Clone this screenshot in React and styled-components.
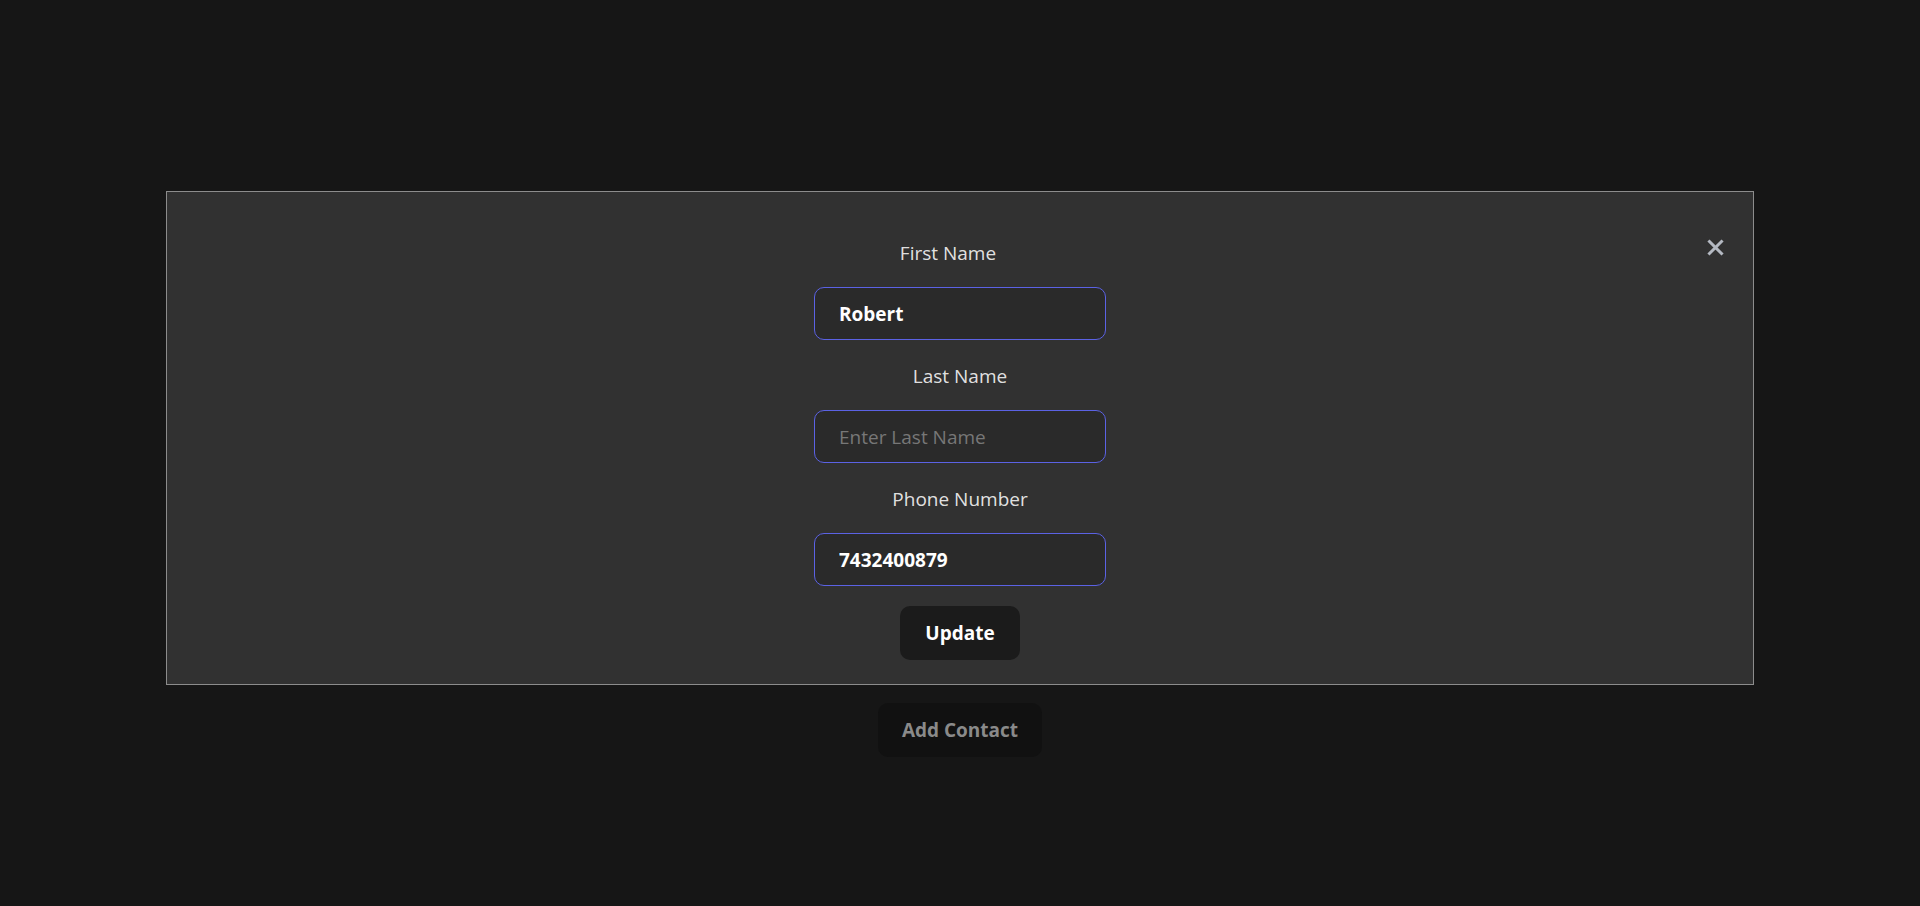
import React, { useState } from 'react';
import styled, { createGlobalStyle } from 'styled-components';

const GlobalStyle = createGlobalStyle`
  body {
    margin: 0;
    background: #161616;
    color: rgba(255, 255, 255, 0.87);
    font-family: "Open Sans", "Noto Sans", sans-serif;
  }
`;

const Page = styled.main`
  display: flex;
  flex-direction: column;
  align-items: center;
  padding-top: 191px;
  min-height: 100vh;
  box-sizing: border-box;
`;

const Modal = styled.section`
  position: relative;
  width: 1588px;
  box-sizing: border-box;
  background: #313131;
  border: 1px solid #8c8c8c;
  padding: 46px 0 24px;
`;

const CloseButton = styled.button`
  position: absolute;
  top: 44px;
  right: 27px;
  width: 22px;
  height: 22px;
  padding: 0;
  border: none;
  background: transparent;
  color: #b4b9c2;
  cursor: pointer;
  display: flex;
  align-items: center;
  justify-content: center;
`;

const Form = styled.form`
  display: flex;
  flex-direction: column;
  align-items: center;
`;

const Label = styled.label`
  display: block;
  font-size: 19px;
  line-height: 30px;
  margin: ${(p) => (p.$first ? '0 24px 19px 0' : '21px 0 19px')};
  color: rgba(255, 255, 255, 0.87);
`;

const Input = styled.input`
  width: 292px;
  height: 53px;
  box-sizing: border-box;
  padding: 0 24px;
  border: 1px solid #5b62e4;
  border-radius: 10px;
  background: #2a2a2a;
  color: #fff;
  font-family: inherit;
  font-size: 19px;
  font-weight: 700;
  outline: none;

  &::placeholder {
    color: #777;
    font-weight: 400;
  }
`;

const Button = styled.button`
  height: 54px;
  padding: 0 ${(p) => (p.$wide ? '24px' : '25px')};
  border: none;
  border-radius: 10px;
  background: ${(p) => (p.$muted ? '#111111' : '#1b1b1b')};
  color: ${(p) => (p.$muted ? '#8a8a8a' : '#ffffff')};
  font-family: inherit;
  font-size: 19px;
  font-weight: 700;
  cursor: pointer;
`;

const UpdateButton = styled(Button)`
  margin-top: 20px;
`;

const AddButton = styled(Button)`
  margin-top: 18px;
`;

const App = () => {
  const [first, setFirst] = useState('Robert');
  const [last, setLast] = useState('');
  const [phone, setPhone] = useState('7432400879');

  return (
    <>
      <GlobalStyle />
      <Page>
        <Modal>
          <CloseButton type="button" aria-label="Close">
            <svg width="17" height="17" viewBox="0 0 17 17">
              <path d="M2.5 2.5 L14.5 14.5 M14.5 2.5 L2.5 14.5" stroke="currentColor" strokeWidth="3" strokeLinecap="square" />
            </svg>
          </CloseButton>
          <Form onSubmit={(e) => e.preventDefault()}>
            <Label $first htmlFor="first">First Name</Label>
            <Input id="first" value={first} onChange={(e) => setFirst(e.target.value)} />
            <Label htmlFor="last">Last Name</Label>
            <Input id="last" placeholder="Enter Last Name" value={last} onChange={(e) => setLast(e.target.value)} />
            <Label htmlFor="phone">Phone Number</Label>
            <Input id="phone" value={phone} onChange={(e) => setPhone(e.target.value)} />
            <UpdateButton type="submit">Update</UpdateButton>
          </Form>
        </Modal>
        <AddButton $muted $wide type="button">Add Contact</AddButton>
      </Page>
    </>
  );
};

export default App;
